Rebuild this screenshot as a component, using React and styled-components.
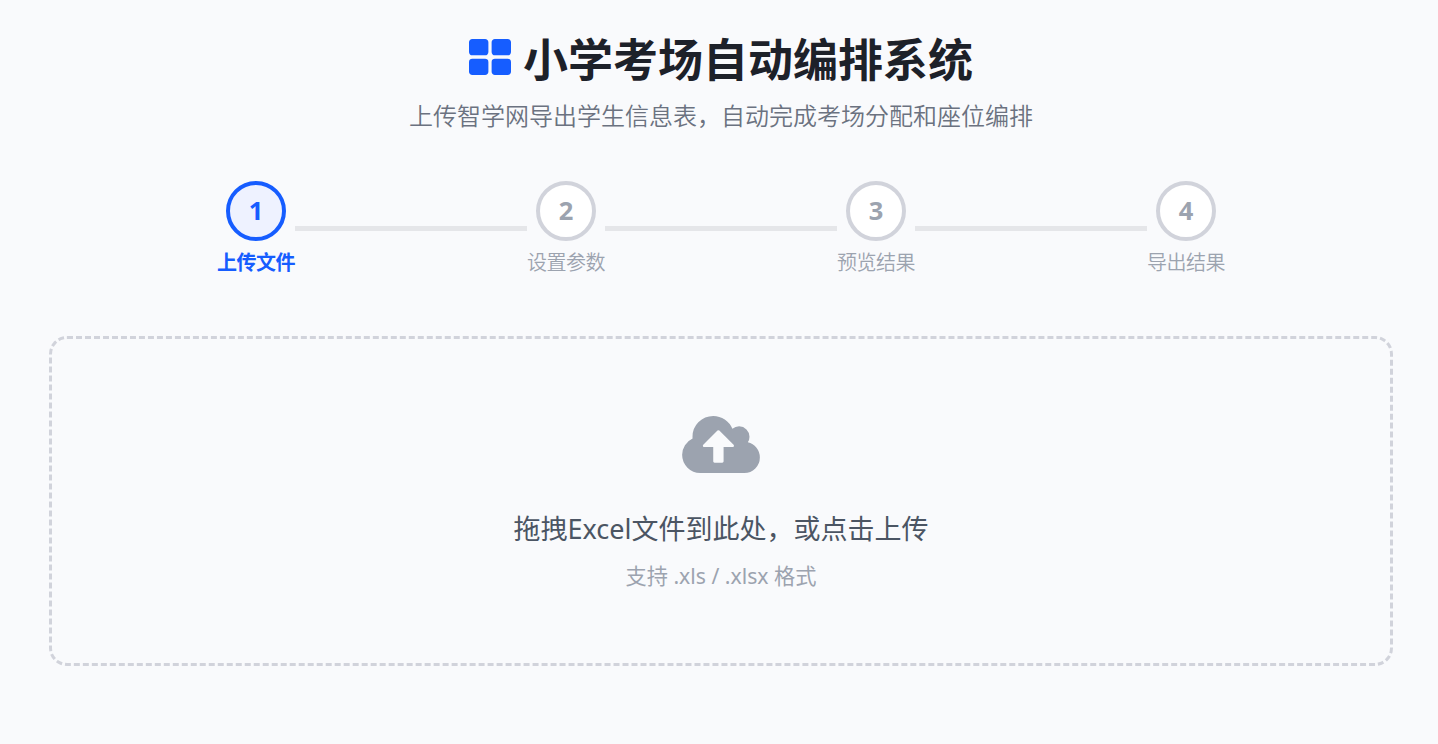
import React, { useState } from "react";
import styled, { createGlobalStyle } from "styled-components";

const GlobalStyle = createGlobalStyle`
  * {
    box-sizing: border-box;
  }

  body {
    margin: 0;
    background-color: #f9fafc;
    font-family: "Noto Sans", "Noto Sans CJK SC", sans-serif;
  }
`;

const Page = styled.div`
  height: 744px;
  padding: 23px 45px 0 49px;
  overflow: hidden;
`;

const Header = styled.header`
  display: flex;
  flex-direction: column;
  align-items: center;
`;

const Title = styled.h1`
  display: flex;
  align-items: center;
  height: 70px;
  margin: 0;
  font-family: "Noto Sans CJK SC", sans-serif;
  font-size: 45px;
  font-weight: 700;
  line-height: 70px;
  color: #1d2129;
  white-space: nowrap;
`;

const GridIcon = styled.svg`
  width: 42px;
  height: 36px;
  margin: 0 12px 2px 0;
  fill: #165dff;
`;

const Subtitle = styled.p`
  margin: 4px 0 0;
  font-family: "Noto Sans CJK SC", sans-serif;
  font-size: 24px;
  font-weight: 350;
  line-height: 36px;
  color: #6b7280;
  white-space: nowrap;
`;

const Steps = styled.div`
  display: flex;
  align-items: center;
  width: 1008px;
  height: 96px;
  margin: 48px auto 0;
`;

const Step = styled.div`
  display: flex;
  flex-direction: column;
  align-items: center;
  width: 78px;
  height: 96px;
`;

const StepCircle = styled.div`
  display: flex;
  align-items: center;
  justify-content: center;
  flex-shrink: 0;
  width: 60px;
  height: 60px;
  padding-bottom: 2px;
  border: 4px solid ${(props) => (props.$active ? "#165dff" : "#d1d3db")};
  border-radius: 50%;
  background-color: ${(props) => (props.$active ? "#eef2ff" : "#ffffff")};
  color: ${(props) => (props.$active ? "#165dff" : "#9ca3af")};
  font-family: "Open Sans", "Noto Sans", sans-serif;
  font-size: 25.5px;
  font-weight: 700;
  line-height: 36px;
`;

const StepLabel = styled.span`
  margin-top: 6px;
  font-family: "Noto Sans CJK SC", sans-serif;
  font-size: 20px;
  letter-spacing: -0.5px;
  font-weight: ${(props) => (props.$active ? 700 : 350)};
  line-height: 29px;
  color: ${(props) => (props.$active ? "#165dff" : "#9ca3af")};
  white-space: nowrap;
`;

const StepLine = styled.div`
  flex: 1;
  height: 5px;
  margin-bottom: 1px;
  background-color: #e5e6e9;
`;

const DropZone = styled.div`
  display: flex;
  flex-direction: column;
  align-items: center;
  height: 330px;
  margin-top: 59px;
  padding-top: 77px;
  border: 3px dashed #d1d3db;
  border-radius: 18px;
  cursor: pointer;
`;

const CloudIcon = styled.svg`
  width: 78px;
  height: 57px;
  fill: #9ca3af;
`;

const DropText = styled.p`
  margin: 35px 0 0;
  font-size: 27px;
  line-height: 42px;
  color: #4b5563;
  white-space: nowrap;
`;

const DropHint = styled.p`
  margin: 11px 0 0;
  font-size: 21.2px;
  line-height: 30px;
  color: #9ca3af;
  white-space: nowrap;
`;

const steps = ["上传文件", "设置参数", "预览结果", "导出结果"];

const App = () => {
  const [current] = useState(0);

  return (
    <>
      <GlobalStyle />
      <Page>
        <Header>
          <Title>
            <GridIcon viewBox="64 128 1664 1408" preserveAspectRatio="none">
              <path d="M832 1024v384q0 52-38 90t-90 38h-512q-52 0-90-38t-38-90v-384q0-52 38-90t90-38h512q52 0 90 38t38 90zm0-768v384q0 52-38 90t-90 38h-512q-52 0-90-38t-38-90v-384q0-52 38-90t90-38h512q52 0 90 38t38 90zm896 768v384q0 52-38 90t-90 38h-512q-52 0-90-38t-38-90v-384q0-52 38-90t90-38h512q52 0 90 38t38 90zm0-768v384q0 52-38 90t-90 38h-512q-52 0-90-38t-38-90v-384q0-52 38-90t90-38h512q52 0 90 38t38 90z" />
            </GridIcon>
            小学考场自动编排系统
          </Title>
          <Subtitle>上传智学网导出学生信息表，自动完成考场分配和座位编排</Subtitle>
        </Header>
        <Steps>
          {steps.map((label, index) => (
            <React.Fragment key={label}>
              {index > 0 && <StepLine />}
              <Step>
                <StepCircle $active={index === current}>{index + 1}</StepCircle>
                <StepLabel $active={index === current}>{label}</StepLabel>
              </Step>
            </React.Fragment>
          ))}
        </Steps>
        <DropZone>
          <CloudIcon viewBox="0 128 1920 1408">
            <path d="M1280 864q0-14-9-23l-352-352q-9-9-23-9t-23 9l-351 351q-10 12-10 24 0 14 9 23t23 9h224v352q0 13 9.5 22.5t22.5 9.5h192q13 0 22.5-9.5t9.5-22.5v-352h224q13 0 22.5-9.5t9.5-22.5zm640 288q0 159-112.5 271.5t-271.5 112.5h-1088q-185 0-316.5-131.5t-131.5-316.5q0-130 70-240t188-165q-2-30-2-43 0-212 150-362t362-150q156 0 285.5 87t188.5 231q71-62 166-62 106 0 181 75t75 181q0 76-41 138 130 31 213.5 135.5t83.5 238.5z" />
          </CloudIcon>
          <DropText>拖拽Excel文件到此处，或点击上传</DropText>
          <DropHint>支持 .xls / .xlsx 格式</DropHint>
        </DropZone>
      </Page>
    </>
  );
};

export default App;
